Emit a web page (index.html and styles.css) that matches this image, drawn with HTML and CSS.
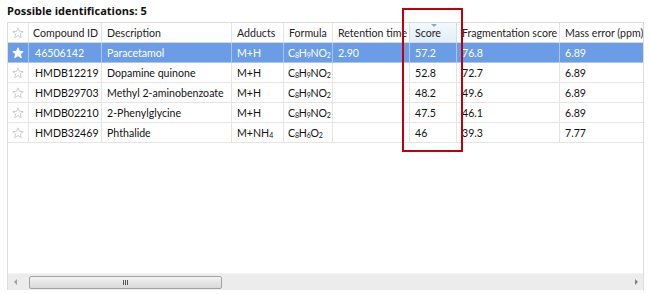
FILE: index.html
```html
<!DOCTYPE html>
<html lang="en">

<head>
    <meta charset="UTF-8">
    <title>Possible identifications</title>
    <link rel="stylesheet" href="styles.css">
</head>

<body>
    <div id="panel">
        <div class="title">Possible identifications: 5</div>
        <div class="grid">
            <div class="rows">
                <div class="row header">
                    <div class="cell star"><svg viewBox="0 0 12 12"><path d="M6 0.8 7.5 4.3 11.2 4.6 8.4 7 9.3 10.7 6 8.7 2.7 10.7 3.6 7 0.8 4.6 4.5 4.3Z"/></svg></div>
                    <div class="cell">Compound ID</div>
                    <div class="cell">Description</div>
                    <div class="cell">Adducts</div>
                    <div class="cell">Formula</div>
                    <div class="cell">Retention time</div>
                    <div class="cell sorted">Score</div>
                    <div class="cell">Fragmentation score</div>
                    <div class="cell">Mass error (ppm)</div>
                </div>
                <div class="row selected">
                    <div class="cell star"><svg viewBox="0 0 12 12"><path d="M6 0.8 7.5 4.3 11.2 4.6 8.4 7 9.3 10.7 6 8.7 2.7 10.7 3.6 7 0.8 4.6 4.5 4.3Z"/></svg></div>
                    <div class="cell id">46506142</div>
                    <div class="cell">Paracetamol</div>
                    <div class="cell">M+H</div>
                    <div class="cell formula">C<sub>8</sub>H<sub>9</sub>NO<sub>2</sub></div>
                    <div class="cell">2.90</div>
                    <div class="cell">57.2</div>
                    <div class="cell">76.8</div>
                    <div class="cell">6.89</div>
                </div>
                <div class="row">
                    <div class="cell star"><svg viewBox="0 0 12 12"><path d="M6 0.8 7.5 4.3 11.2 4.6 8.4 7 9.3 10.7 6 8.7 2.7 10.7 3.6 7 0.8 4.6 4.5 4.3Z"/></svg></div>
                    <div class="cell id">HMDB12219</div>
                    <div class="cell">Dopamine quinone</div>
                    <div class="cell">M+H</div>
                    <div class="cell formula">C<sub>8</sub>H<sub>9</sub>NO<sub>2</sub></div>
                    <div class="cell"></div>
                    <div class="cell">52.8</div>
                    <div class="cell">72.7</div>
                    <div class="cell">6.89</div>
                </div>
                <div class="row">
                    <div class="cell star"><svg viewBox="0 0 12 12"><path d="M6 0.8 7.5 4.3 11.2 4.6 8.4 7 9.3 10.7 6 8.7 2.7 10.7 3.6 7 0.8 4.6 4.5 4.3Z"/></svg></div>
                    <div class="cell id">HMDB29703</div>
                    <div class="cell">Methyl 2-aminobenzoate</div>
                    <div class="cell">M+H</div>
                    <div class="cell formula">C<sub>8</sub>H<sub>9</sub>NO<sub>2</sub></div>
                    <div class="cell"></div>
                    <div class="cell">48.2</div>
                    <div class="cell">49.6</div>
                    <div class="cell">6.89</div>
                </div>
                <div class="row">
                    <div class="cell star"><svg viewBox="0 0 12 12"><path d="M6 0.8 7.5 4.3 11.2 4.6 8.4 7 9.3 10.7 6 8.7 2.7 10.7 3.6 7 0.8 4.6 4.5 4.3Z"/></svg></div>
                    <div class="cell id">HMDB02210</div>
                    <div class="cell">2-Phenylglycine</div>
                    <div class="cell">M+H</div>
                    <div class="cell formula">C<sub>8</sub>H<sub>9</sub>NO<sub>2</sub></div>
                    <div class="cell"></div>
                    <div class="cell">47.5</div>
                    <div class="cell">46.1</div>
                    <div class="cell">6.89</div>
                </div>
                <div class="row">
                    <div class="cell star"><svg viewBox="0 0 12 12"><path d="M6 0.8 7.5 4.3 11.2 4.6 8.4 7 9.3 10.7 6 8.7 2.7 10.7 3.6 7 0.8 4.6 4.5 4.3Z"/></svg></div>
                    <div class="cell id">HMDB32469</div>
                    <div class="cell">Phthalide</div>
                    <div class="cell">M+NH<sub>4</sub></div>
                    <div class="cell formula">C<sub>8</sub>H<sub>6</sub>O<sub>2</sub></div>
                    <div class="cell"></div>
                    <div class="cell">46</div>
                    <div class="cell">39.3</div>
                    <div class="cell">7.77</div>
                </div>
            </div>
            <div class="hscroll">
                <span class="arrow left"></span>
                <div class="thumb"><span class="grip"></span></div>
                <span class="arrow right"></span>
            </div>
        </div>
        <div class="highlight"></div>
    </div>
</body>

</html>
```

FILE: styles.css
```css
body {
    margin: 0;
    background: white;
    font-family: Lato, "Open Sans", Arial, sans-serif;
    font-size: 10.6px;
    color: #111;
}

#panel {
    position: relative;
    padding: 3px 7px 0 7px;
}

.title {
    font-family: "Open Sans", Arial, sans-serif;
    font-weight: bold;
    font-size: 11px;
    height: 19px;
    line-height: 15px;
}

.grid {
    width: 637px;
    height: 268px;
    box-sizing: border-box;
    border: 1px solid #dcdcdc;
    border-bottom: none;
    display: flex;
    flex-direction: column;
}

.rows {
    flex: 1;
}

.row {
    display: grid;
    grid-template-columns: 21px 73px 130px 52px 49px 77px 47px 103px 1fr;
    height: 20px;
}

.cell {
    box-sizing: border-box;
    border-right: 1px solid #e4e4e4;
    border-bottom: 1px solid #e4e4e4;
    padding: 1px 3px 0 5px;
    line-height: 18px;
    white-space: nowrap;
    overflow: hidden;
}

.cell:last-child {
    border-right: none;
}

.cell.id {
    padding-left: 6px;
}

.cell.formula {
    padding-left: 4px;
    letter-spacing: -0.2px;
}

.cell sub {
    font-size: 7px;
    vertical-align: -1px;
    line-height: 0;
}

.star {
    padding: 0;
    display: flex;
    align-items: center;
    justify-content: center;
}

.star svg {
    width: 12px;
    height: 12px;
    fill: none;
    stroke: #c8c8c8;
    stroke-width: 0.9;
}

.header .cell {
    color: #222;
    border-bottom-color: #d8d8d8;
}

.header .cell:nth-child(2) {
    padding-left: 4px;
}

.header .sorted {
    position: relative;
    background: linear-gradient(#f3f9fe, #e1eef9);
    border-left: 1px solid #cde0f0;
    border-right-color: #cde0f0;
    margin-left: -1px;
    padding-left: 5px;
}

.header .sorted::before {
    content: "";
    position: absolute;
    left: 21px;
    top: 1px;
    border-left: 3px solid transparent;
    border-right: 3px solid transparent;
    border-top: 3px solid #8ea7bf;
}

.selected {
    background: #6a9de6;
    color: white;
}

.selected .cell {
    border-right-color: #a9c6f0;
    border-bottom-color: #a9c6f0;
}

.selected .star svg {
    fill: white;
    stroke: white;
}

.hscroll {
    height: 16px;
    background: #ececec;
    border-top: 1px solid #f4f4f4;
    display: flex;
    align-items: center;
    position: relative;
}

.thumb {
    margin-left: 12px;
    width: 193px;
    height: 13px;
    box-sizing: border-box;
    border: 1px solid #a2a2a2;
    border-radius: 2px;
    background: linear-gradient(#f2f2f2, #d9d9d9);
    display: flex;
    align-items: center;
    justify-content: center;
}

.grip {
    width: 5px;
    height: 5px;
    border-left: 1px solid #555;
    border-right: 1px solid #555;
    position: relative;
    box-sizing: border-box;
}

.grip::after {
    content: "";
    position: absolute;
    left: 1px;
    top: 0;
    width: 1px;
    height: 5px;
    background: #555;
}

.arrow {
    width: 0;
    height: 0;
    border-top: 3px solid transparent;
    border-bottom: 3px solid transparent;
}

.arrow.left {
    margin-left: 6px;
    border-right: 3px solid #a0a0a0;
}

.arrow.right {
    margin-left: auto;
    margin-right: 5px;
    border-left: 3px solid #808080;
}

.highlight {
    position: absolute;
    left: 402px;
    top: 8px;
    width: 61px;
    height: 144px;
    box-sizing: border-box;
    border: 2px solid #c2000b;
}
```
